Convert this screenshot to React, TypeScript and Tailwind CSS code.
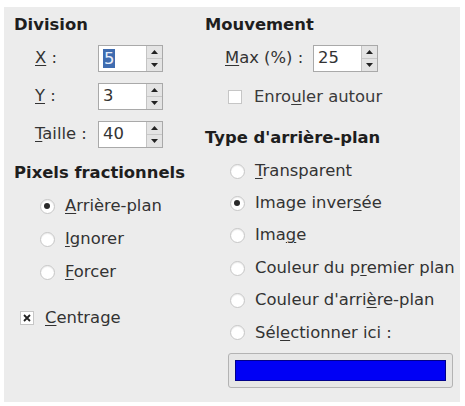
import React from 'react';

const font = { fontFamily: '"DejaVu Sans", "Liberation Sans", sans-serif' };

// label text with one underlined mnemonic letter
function Mn({ pre = '', key_, post = '' }: { pre?: string; key_: string; post?: string }) {
  return (
    <span>
      {pre}
      <span className="underline underline-offset-2 decoration-1">{key_}</span>
      {post}
    </span>
  );
}

function Spin({ value, selected = false }: { value: string; selected?: boolean }) {
  return (
    <div className="flex h-[27px] w-[65px] border border-[#a9a9a9] bg-white">
      <div className="flex-1 flex items-center pl-[4px]">
        <span className={selected ? 'bg-[#3f6cb0] text-[#e8eefa] px-[1px] leading-[19px]' : ''}>{value}</span>
      </div>
      <div className="w-[16px] flex flex-col border-l border-[#c4c4c4] bg-[#e4e4e4]">
        <div className="flex-1 flex items-center justify-center border-b border-[#c8c8c8]">
          <svg width="7" height="4" viewBox="0 0 7 4"><path d="M0 4 L3.5 0 L7 4 Z" fill="#222" /></svg>
        </div>
        <div className="flex-1 flex items-center justify-center">
          <svg width="7" height="4" viewBox="0 0 7 4"><path d="M0 0 L3.5 4 L7 0 Z" fill="#222" /></svg>
        </div>
      </div>
    </div>
  );
}

function Radio({ checked = false, children }: { checked?: boolean; children: React.ReactNode }) {
  return (
    <div className="flex items-center h-[22px]">
      <div className="w-[15px] h-[15px] -ml-[0.5px] rounded-full border border-[#c6c6c6] bg-white flex items-center justify-center shadow-[inset_0_1px_1px_rgba(0,0,0,0.08)]">
        {checked && <div className="w-[6px] h-[6px] rounded-full bg-[#2a2a2a]" />}
      </div>
      <div className="ml-[10.5px]">{children}</div>
    </div>
  );
}

function Check({ checked = false }: { checked?: boolean }) {
  return (
    <div className="w-[14px] h-[14px] border border-[#c6c6c6] bg-white flex items-center justify-center">
      {checked && (
        <svg width="8" height="8" viewBox="0 0 8 8">
          <path d="M1 1 L7 7 M7 1 L1 7" stroke="#222" strokeWidth="1.8" />
        </svg>
      )}
    </div>
  );
}

export default function App() {
  return (
    <div className="w-[465px] h-[406px] bg-white pt-[7px] pl-[4px]" style={font}>
      <div className="w-[456px] h-[395px] bg-[#ececec] text-[16.4px] text-[#333] flex">
        {/* left column */}
        <div className="w-[191px] pl-[10px] pt-[8px] flex flex-col">
          <div className="h-[20px] leading-[20px] font-bold text-[#1e1e1e]">Division</div>
          <div className="mt-[10px] flex flex-col gap-[11px] pl-[21px]">
            <div className="flex items-center h-[27px]">
              <div className="w-[63px]"><Mn key_="X" post=" :" /></div>
              <Spin value="5" selected />
            </div>
            <div className="flex items-center h-[27px]">
              <div className="w-[63px]"><Mn key_="Y" post=" :" /></div>
              <Spin value="3" />
            </div>
            <div className="flex items-center h-[27px]">
              <div className="w-[63px]"><Mn key_="T" post="aille :" /></div>
              <Spin value="40" />
            </div>
          </div>
          <div className="mt-[15px] h-[20px] leading-[20px] font-bold text-[#1e1e1e] whitespace-nowrap">Pixels fractionnels</div>
          <div className="mt-[12px] flex flex-col gap-[11px] pl-[26px]">
            <Radio checked><Mn key_="A" post="rrière-plan" /></Radio>
            <Radio><Mn key_="I" post="gnorer" /></Radio>
            <Radio><Mn key_="F" post="orcer" /></Radio>
          </div>
          <div className="mt-[24px] flex items-center h-[22px] pl-[6px]">
            <Check checked />
            <div className="ml-[11px]"><Mn key_="C" post="entrage" /></div>
          </div>
        </div>

        {/* right column */}
        <div className="flex-1 pt-[8px] pl-[10px] flex flex-col">
          <div className="h-[20px] leading-[20px] font-bold text-[#1e1e1e]">Mouvement</div>
          <div className="mt-[10px] flex items-center h-[27px] pl-[20px]">
            <div className="w-[88px] whitespace-nowrap"><Mn key_="M" post="ax (%) :" /></div>
            <Spin value="25" />
          </div>
          <div className="mt-[14px] flex items-center h-[22px] pl-[23px]">
            <Check />
            <div className="ml-[12px] text-[#3a3a3a]"><Mn pre="Enro" key_="u" post="ler autour" /></div>
          </div>
          <div className="mt-[20px] h-[20px] leading-[20px] font-bold text-[#1e1e1e]">Type d'arrière-plan</div>
          <div className="mt-[12px] flex flex-col gap-[10.4px] pl-[25px]">
            <Radio><Mn key_="T" post="ransparent" /></Radio>
            <Radio checked><Mn pre="Image inver" key_="s" post="ée" /></Radio>
            <Radio><Mn pre="Ima" key_="g" post="e" /></Radio>
            <Radio><Mn pre="Couleur du p" key_="r" post="emier plan" /></Radio>
            <Radio><Mn pre="Couleur d'arri" key_="è" post="re-plan" /></Radio>
            <Radio><Mn pre="Sél" key_="e" post="ctionner ici :" /></Radio>
          </div>
          <div className="mt-[9px] ml-[23px] w-[225px] h-[35px] rounded-[3px] border border-[#b3b3b3] bg-[#e6e6e6] p-[6px]">
            <div className="w-full h-full bg-[#0000f5] border border-[#00008a]" />
          </div>
        </div>
      </div>
    </div>
  );
}
